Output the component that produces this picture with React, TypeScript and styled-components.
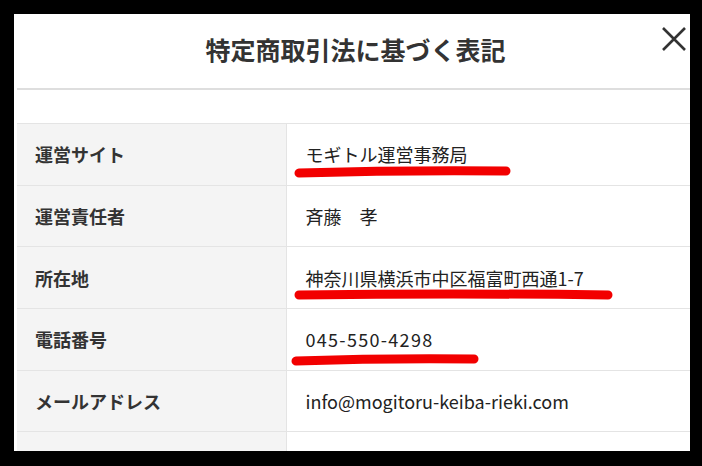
import styled, { createGlobalStyle } from "styled-components";

interface Row {
  label: string;
  value: string;
  spacing?: number;
  mark?: { from: number; to: number; y: number; tilt: number };
}

const rows: Row[] = [
  { label: "運営サイト", value: "モギトル運営事務局", mark: { from: 12, to: 219, y: 48, tilt: 1 } },
  { label: "運営責任者", value: "斉藤　孝" },
  { label: "所在地", value: "神奈川県横浜市中区福富町西通1-7", mark: { from: 12, to: 321, y: 48, tilt: 0 } },
  { label: "電話番号", value: "045-550-4298", spacing: 1.3, mark: { from: 9, to: 187, y: 51, tilt: 1 } },
  { label: "メールアドレス", value: "info@mogitoru-keiba-rieki.com" },
  { label: "", value: "" },
];

const Global = createGlobalStyle`
  html, body {
    margin: 0;
    padding: 0;
    background: #000;
  }
  body {
    width: 702px;
    height: 466px;
    overflow: hidden;
    font-family: "Noto Sans CJK JP", "Noto Sans", sans-serif;
  }
`;

const Panel = styled.div`
  margin: 14px 0 0 14px;
  width: 676px;
  height: 437px;
  background: #fff;
  overflow: hidden;
  padding-left: 3px;
  box-sizing: border-box;
`;

const Header = styled.div`
  position: relative;
  height: 74px;
  display: flex;
  align-items: center;
  justify-content: center;
  border-bottom: 2px solid #dedede;
`;

const Title = styled.h1`
  margin: 0 0 4px 4px;
  font-size: 25px;
  font-weight: 700;
  color: #333;
`;

const Close = styled.button`
  position: absolute;
  right: 3px;
  top: 12px;
  width: 26px;
  height: 26px;
  padding: 0;
  border: none;
  background: none;
  display: flex;
  align-items: center;
  justify-content: center;
`;

const Body = styled.div`
  padding-top: 33px;
`;

const Table = styled.table`
  width: 100%;
  border-collapse: collapse;
  table-layout: fixed;
  border-top: 1px solid #e4e4e4;
`;

const Label = styled.th`
  width: 269px;
  height: 61.7px;
  box-sizing: border-box;
  padding: 0 0 0 18px;
  background: #f4f4f4;
  border-bottom: 1px solid #e4e4e4;
  border-right: 1px solid #e4e4e4;
  text-align: left;
  font-size: 18px;
  font-weight: 700;
  color: #333;
`;

const Value = styled.td<{ $spacing?: number }>`
  position: relative;
  padding: 0 0 0 19px;
  border-bottom: 1px solid #e4e4e4;
  font-size: 18px;
  color: #222;
  letter-spacing: ${(p) => p.$spacing ?? 0}px;
`;

const Mark = styled.svg`
  position: absolute;
  left: 0;
  top: 0;
  pointer-events: none;
`;

function Underline({ from, to, y, tilt }: { from: number; to: number; y: number; tilt: number }) {
  const mid = (from + to) / 2;
  return (
    <Mark width={to + 10} height={y + 10}>
      <path
        d={`M${from} ${y + tilt} Q${mid} ${y - 2} ${to} ${y - tilt}`}
        stroke="#f20000"
        strokeWidth={9}
        strokeLinecap="round"
        fill="none"
      />
    </Mark>
  );
}

export default function App() {
  return (
    <>
      <Global />
      <Panel>
        <Header>
          <Title>特定商取引法に基づく表記</Title>
          <Close aria-label="close">
            <svg width="24" height="24" viewBox="0 0 24 24">
              <path d="M1 1 L23 23 M23 1 L1 23" stroke="#333" strokeWidth="2.6" />
            </svg>
          </Close>
        </Header>
        <Body>
          <Table>
            <tbody>
              {rows.map((row, i) => (
                <tr key={i}>
                  <Label>{row.label}</Label>
                  <Value $spacing={row.spacing}>
                    {row.value}
                    {row.mark && <Underline {...row.mark} />}
                  </Value>
                </tr>
              ))}
            </tbody>
          </Table>
        </Body>
      </Panel>
    </>
  );
}
